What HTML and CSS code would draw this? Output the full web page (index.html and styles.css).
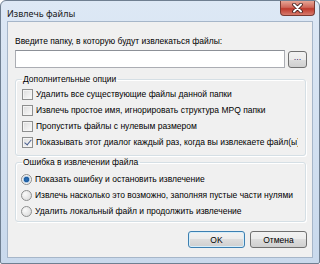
FILE: index.html
```html
<!DOCTYPE html>
<html lang="ru">
<head>
    <meta charset="UTF-8">
    <title>Извлечь файлы</title>
    <link rel="stylesheet" href="styles.css">
</head>
<body>
    <div class="window">
        <div class="titlebar">
            <span class="title">Извлечь файлы</span>
            <span class="close">
                <svg width="13" height="10" viewBox="0 0 13 10">
                    <path d="M3 1.5 L10 8.5 M10 1.5 L3 8.5" stroke="#3b1a18" stroke-width="3.6" stroke-linecap="round"/>
                    <path d="M3 1.5 L10 8.5 M10 1.5 L3 8.5" stroke="#fff" stroke-width="2" stroke-linecap="round"/>
                </svg>
            </span>
        </div>

        <div class="client">
            <div class="path-label">Введите папку, в которую будут извлекаться файлы:</div>
            <div class="path-row">
                <input class="path-input" type="text">
                <button class="browse" type="button">...</button>
            </div>

            <fieldset class="group options">
                <legend>Дополнительные опции</legend>
                <div class="option"><span class="check"></span><span class="text">Удалить все существующие файлы данной папки</span></div>
                <div class="option"><span class="check"></span><span class="text">Извлечь простое имя, игнорировать структура MPQ папки</span></div>
                <div class="option"><span class="check"></span><span class="text">Пропустить файлы с нулевым размером</span></div>
                <div class="option clipped"><span class="check checked"></span><span class="text">Показывать этот диалог каждый раз, когда вы извлекаете файл(ы)</span></div>
            </fieldset>

            <fieldset class="group errors">
                <legend>Ошибка в извлечении файла</legend>
                <div class="option"><span class="radio selected"></span><span class="text">Показать ошибку и остановить извлечение</span></div>
                <div class="option"><span class="radio"></span><span class="text">Извлечь насколько это возможно, заполняя пустые части нулями</span></div>
                <div class="option"><span class="radio"></span><span class="text">Удалить локальный файл и продолжить извлечение</span></div>
            </fieldset>

            <div class="actions">
                <button class="btn default" type="button">OK</button>
                <button class="btn" type="button">Отмена</button>
            </div>
        </div>
    </div>
</body>
</html>
```

FILE: styles.css
```css
body {
    margin: 0;
    font-family: 'Liberation Sans', Arial, sans-serif;
    font-size: 8.5px;
    color: #000;
    background-color: #fff;
}

.window {
    width: 320px;
    height: 264px;
    box-sizing: border-box;
    display: flex;
    flex-direction: column;
    padding: 0 6px 5px 6px;
    border: 1px solid #6f7f91;
    border-radius: 6px 6px 2px 2px;
    background: linear-gradient(#dde8f5, #c9d9ec);
}

.titlebar {
    height: 20px;
    display: flex;
    align-items: flex-start;
}

.title {
    padding-top: 7px;
    font-family: 'Noto Sans', sans-serif;
    font-size: 9px;
    line-height: 11px;
    color: #1a1a1a;
}

.close {
    margin-left: auto;
    margin-right: -2px;
    width: 35px;
    height: 15px;
    box-sizing: border-box;
    display: flex;
    justify-content: center;
    align-items: center;
    border: 1px solid #7a3a32;
    border-top: none;
    border-radius: 0 0 4px 4px;
    background: linear-gradient(#e7a595, #d0685a 45%, #bf3a2c 55%, #d67a6c);
}

.client {
    flex: 1;
    display: flex;
    flex-direction: column;
    padding: 14px 5px 0 7px;
    border: 1px solid #a6b6c9;
    background-color: #f0f0f0;
}

.path-label {
    line-height: 11px;
}

.path-row {
    display: flex;
    align-items: center;
    margin-top: 3px;
    gap: 3px;
}

.path-input {
    width: 270px;
    height: 18px;
    box-sizing: border-box;
    margin: 0;
    border: 1px solid #abadb3;
    border-top-color: #8c9097;
    background-color: #fff;
}

.browse {
    width: 19px;
    height: 17px;
    padding: 0 0 4px 0;
    margin: 0;
    border: 1px solid #707070;
    border-radius: 3px;
    background: linear-gradient(#f2f2f2, #ebebeb 50%, #dddddd 50%, #cfcfcf);
    font-family: 'Liberation Sans', sans-serif;
    font-size: 9px;
    color: #3a2a6a;
}

.group {
    margin: 6px 1px 0 0;
    padding: 1px 0 5px 6px;
    border: 1px solid #d5dfe5;
    border-radius: 3px;
    box-shadow: inset 1px 1px 0 #fff, 1px 1px 0 #fff;
}

.group legend {
    padding: 0 2px 0 1px;
    line-height: 11px;
}

.errors {
    margin-top: 1px;
    padding-top: 3px;
    padding-bottom: 2px;
}

.option {
    height: 16px;
    display: flex;
    align-items: center;
    gap: 3px;
    white-space: nowrap;
}

.clipped {
    width: 276px;
    overflow: hidden;
}

.check {
    flex: none;
    width: 11px;
    height: 11px;
    box-sizing: border-box;
    position: relative;
    border: 1px solid #8e8f8f;
    background: linear-gradient(135deg, #dcdcdc, #fbfbfb);
    box-shadow: inset 0 0 0 1px #f4f4f4;
}

.checked::after {
    content: "";
    position: absolute;
    left: 3px;
    top: 0;
    width: 3px;
    height: 6px;
    border: solid #4a5f8f;
    border-width: 0 1.5px 1.5px 0;
    transform: rotate(40deg);
}

.radio {
    flex: none;
    width: 11px;
    height: 11px;
    box-sizing: border-box;
    border: 1px solid #8e8f8f;
    border-radius: 50%;
    margin-left: -1px;
    background: radial-gradient(circle at 35% 35%, #fafafa, #d6d6d6);
}

.selected {
    background: radial-gradient(circle, #2d6fb7 0, #1c5c9f 2.5px, #a9c6e3 3px, #f2f2f2 4px);
}

.actions {
    display: flex;
    justify-content: flex-end;
    gap: 5px;
    margin-top: 9px;
}

.btn {
    width: 57px;
    height: 17px;
    margin: 0;
    padding: 0;
    border: 1px solid #707070;
    border-radius: 3px;
    background: linear-gradient(#f2f2f2, #ebebeb 50%, #dddddd 50%, #cfcfcf);
    font-family: 'Liberation Sans', sans-serif;
    font-size: 8.5px;
    color: #000;
}

.btn.default {
    border-color: #3c7fb1;
    box-shadow: inset 0 0 0 1px #d6eefa;
}
```
